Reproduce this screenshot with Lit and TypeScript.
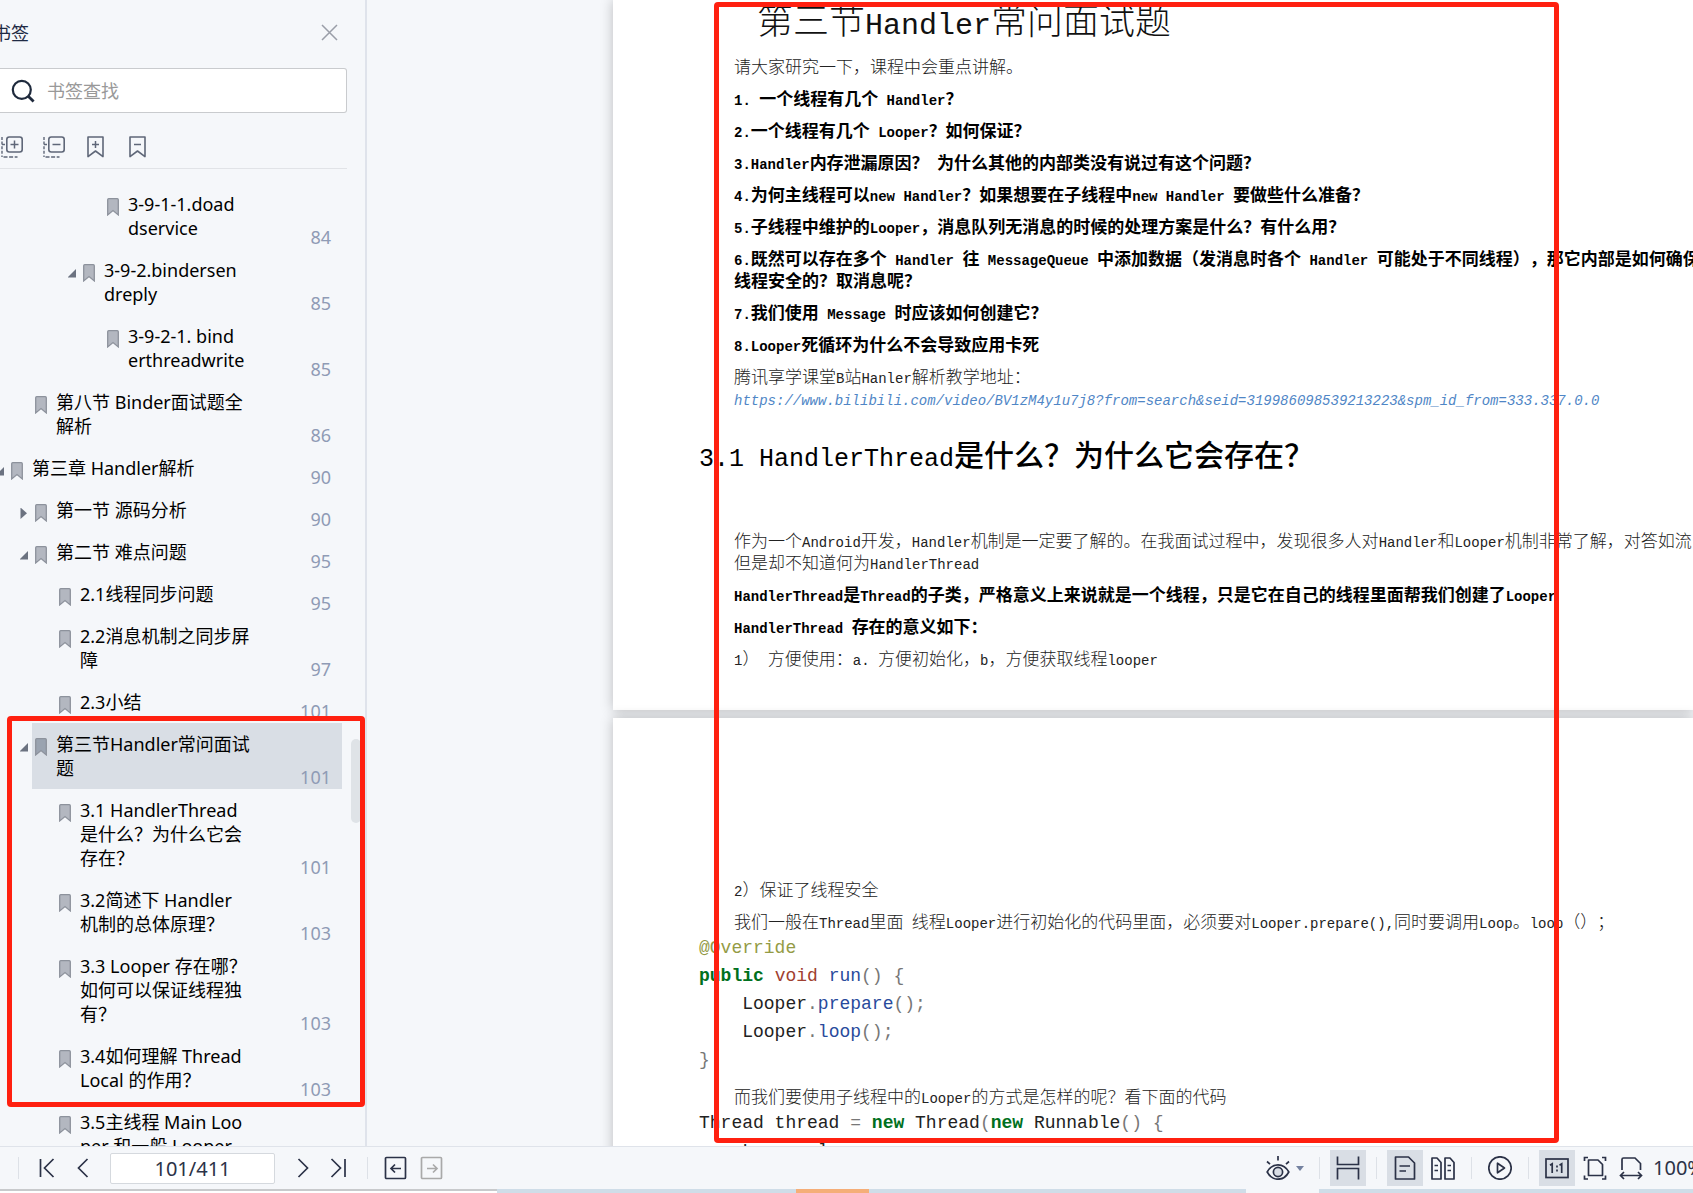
import { LitElement, html, css, svg, nothing } from "lit";
import { customElement, property, state } from "lit/decorators.js";
import { classMap } from "lit/directives/class-map.js";
import { styleMap } from "lit/directives/style-map.js";

type Mark = { id: number; level: number; lines: string[]; page: string; arrow?: "open" | "closed" };

const MARKS: Mark[] = [
  { id: 1, level: 4, lines: ["3-9-1-1.doad", "dservice"], page: "84" },
  { id: 2, level: 3, lines: ["3-9-2.bindersen", "dreply"], page: "85", arrow: "open" },
  { id: 3, level: 4, lines: ["3-9-2-1. bind", "erthreadwrite"], page: "85" },
  { id: 4, level: 1, lines: ["第八节 Binder面试题全", "解析"], page: "86" },
  { id: 5, level: 0, lines: ["第三章 Handler解析"], page: "90", arrow: "open" },
  { id: 6, level: 1, lines: ["第一节 源码分析"], page: "90", arrow: "closed" },
  { id: 7, level: 1, lines: ["第二节 难点问题"], page: "95", arrow: "open" },
  { id: 8, level: 2, lines: ["2.1线程同步问题"], page: "95" },
  { id: 9, level: 2, lines: ["2.2消息机制之同步屏", "障"], page: "97" },
  { id: 10, level: 2, lines: ["2.3小结"], page: "101" },
  { id: 11, level: 1, lines: ["第三节Handler常问面试", "题"], page: "101", arrow: "open" },
  { id: 12, level: 2, lines: ["3.1 HandlerThread", "是什么？为什么它会", "存在？"], page: "101" },
  { id: 13, level: 2, lines: ["3.2简述下 Handler", "机制的总体原理？"], page: "103" },
  { id: 14, level: 2, lines: ["3.3 Looper 存在哪？", "如何可以保证线程独", "有？"], page: "103" },
  { id: 15, level: 2, lines: ["3.4如何理解 Thread", "Local 的作用？"], page: "103" },
  { id: 16, level: 2, lines: ["3.5主线程 Main Loo", "per 和一般 Looper"], page: "" },
];

@customElement("bookmark-panel")
export class BookmarkPanel extends LitElement {
  @state() private selected = 11;

  static styles = css`
    :host {
      display: flex;
      flex-direction: column;
      flex: none;
      width: 365px;
      border-right: 2px solid #dfe3eb;
      background: #f5f7fa;
      overflow: hidden;
      position: relative;
      font-family: "Noto Sans", "Noto Sans CJK SC", sans-serif;
      font-size: 18px;
      color: #000;
    }
    button { border: 0; background: none; padding: 0; margin: 0; font: inherit; color: inherit; }
    svg { display: block; }
    .head { display: flex; align-items: center; justify-content: space-between; height: 64px; padding: 0 27px 4px 0; }
    .title { margin: 0 0 0 -7px; font-size: 18px; font-weight: 400; color: #1f2a44; }
    .search {
      display: flex; align-items: center; gap: 12px; height: 43px; margin-right: 18px; padding-left: 11px;
      border: 1px solid #c9cbce; border-left: 0; border-radius: 0 3px 3px 0; background: #fff;
    }
    .search input { flex: 1; min-width: 0; border: 0; outline: 0; padding: 0; background: none; font: inherit; color: #222; }
    .search input::placeholder { color: #999; opacity: 1; }
    .tools { display: flex; align-items: center; gap: 18px; height: 43px; padding: 12px 0 0; margin-right: 18px; border-bottom: 1px solid #e1e3e7; }
    .tree { list-style: none; flex: 1; min-height: 0; overflow: hidden; margin: 0 23px 0 -4px; padding: 14px 0 0; }
    .row { display: flex; align-items: stretch; }
    .toggle { width: 8px; height: 10px; margin: 19px 4px 0 0; flex: none; }
    .link { display: flex; flex: 1; min-width: 0; padding: 0 11px 0 3px; color: inherit; text-decoration: none; }
    .link.on { background: #d9dee5; }
    .mark { margin: 15px 9px 0 0; flex: none; }
    .label { flex: 1; padding: 9px 0; line-height: 24px; white-space: nowrap; text-spacing-trim: space-all; }
    .num { align-self: flex-end; line-height: 24px; color: #8f9bb5; }
    .thumb { position: absolute; right: 4px; top: 739px; width: 10px; height: 84px; border-radius: 5px; background: #dfe3e7; }
  `;

  private box(plus: boolean) {
    return svg`<g fill="none" stroke="#5f6778">
      <rect x="6.8" y="2" width="15.4" height="15" rx="2.5" stroke-width="1.6"/>
      <path d="M10.5 9.5h8" stroke-width="1.5"/>
      ${plus ? svg`<path d="M14.5 5.5v8" stroke-width="1.5"/>` : nothing}
      <path d="M2 2v20M2 9.5h5" stroke-width="1.4" stroke-dasharray="3 1.6"/>
      <path d="M3.5 22h14" stroke-width="1.6" stroke-dasharray="4 1.6"/></g>`;
  }

  private flag(plus: boolean) {
    return svg`<g fill="none" stroke="#5f6778" stroke-width="1.6">
      <path d="M4 2h15v19.6L11.5 16 4 21.6z" stroke-linejoin="round"/>
      <path d="M8 9.5h7" stroke-width="1.5"/>
      ${plus ? svg`<path d="M11.5 6v7" stroke-width="1.5"/>` : nothing}</g>`;
  }

  private toggle(m: Mark) {
    if (!m.arrow) return html`<span class="toggle"></span>`;
    return html`<button class="toggle" aria-label=${m.arrow === "open" ? "折叠" : "展开"}>
      <svg width="9" height="11" viewBox="0 0 9 11">
        ${m.arrow === "open"
          ? svg`<path d="M8 1v8.500H-.5z" fill="#6b7280"/>`
          : svg`<path d="M.5 -.5l6.500 5.700-6.500 5.700z" fill="#6b7280"/>`}
      </svg></button>`;
  }

  render() {
    return html`
      <div class="head">
        <h2 class="title">书签</h2>
        <button class="close" aria-label="关闭">
          <svg width="17" height="17" viewBox="0 0 17 17"><path d="M1 1l15 15M16 1L1 16" stroke="#9a9ea8" stroke-width="1.5"/></svg>
        </button>
      </div>
      <label class="search">
        <svg width="24" height="24" viewBox="0 0 24 24" fill="none" stroke="#1f2a3d" stroke-width="2.2"><circle cx="10.8" cy="10.8" r="9"/><path d="M17 17l5.6 5.6" stroke-width="2.8"/></svg>
        <input type="text" placeholder="书签查找" aria-label="书签查找" />
      </label>
      <div class="tools">
        <button aria-label="全部展开"><svg width="24" height="24" viewBox="0 0 24 24">${this.box(true)}</svg></button>
        <button aria-label="全部折叠"><svg width="24" height="24" viewBox="0 0 24 24">${this.box(false)}</svg></button>
        <button aria-label="添加书签"><svg width="24" height="24" viewBox="0 0 24 24">${this.flag(true)}</svg></button>
        <button aria-label="删除书签"><svg width="24" height="24" viewBox="0 0 24 24">${this.flag(false)}</svg></button>
      </div>
      <ul class="tree">
        ${MARKS.map((m) => {
          const on = m.id === this.selected;
          return html`<li class="row" style=${styleMap({ paddingLeft: `${m.level * 24}px` })}>
            ${this.toggle(m)}
            <a class=${classMap({ link: true, on })} href="#p${m.page}" @click=${(e: Event) => { e.preventDefault(); this.selected = m.id; }}>
              <svg class="mark" width="12" height="18" viewBox="0 0 12 18"><path d="M.7 1.7Q.7.7 1.7.7h8.6q1 0 1 1v15.2L6 12.6.7 16.9z" fill=${on ? "#9aa3b0" : "#b3b7c0"} stroke="#8d929c" stroke-width="1.3"/></svg>
              <span class="label">${m.lines.map((l, i) => html`${i ? html`<br />` : nothing}${l}`)}</span>
              <span class="num">${m.page}</span>
            </a>
          </li>`;
        })}
      </ul>
      <div class="thumb"></div>
    `;
  }
}

/* Splits a string so that Latin runs take the narrower half-width face. */
const mixed = (text: string) =>
  (text.match(/[\x20-\x7e]+|[^\x20-\x7e]+/g) ?? []).map((part) =>
    /^[\x20-\x7e]/.test(part) ? html`<span class="latin">${part}</span>` : part
  );

@customElement("document-view")
export class DocumentView extends LitElement {
  static styles = css`
    :host {
      display: flex; flex-direction: column; gap: 8px; flex: 1; min-width: 0; overflow: hidden;
      padding-left: 246px; background: #f5f7fa;
      font-family: "Noto Sans CJK SC", sans-serif; text-spacing-trim: space-all;
    }
    .page { flex: none; padding: 0 0 31px 86px; background: #fff; box-shadow: 0 0 12px rgba(0, 0, 0, 0.24); white-space: nowrap; }
    .second { padding-top: 160px; }
    .latin { font-family: "Liberation Mono", monospace; font-size: 14px; line-height: 1; white-space: pre; }
    h1 { margin: 0 0 14px 58px; font-size: 36px; line-height: 36px; font-weight: 300; color: #111; }
    h1 .latin { font-size: 30px; }
    h2 { margin: 24px 0 56px; font-size: 30px; line-height: 40px; font-weight: 500; color: #000; }
    h2 .latin { font-size: 25px; }
    p { margin: 0 0 10px 35px; font-size: 17px; line-height: 22px; font-weight: 300; color: #222; }
    .strong { font-weight: 700; color: #000; }
    .tight { margin-bottom: 2px; }
    a { color: #4f86c6; font-style: italic; text-decoration: none; }
    pre { margin: 0 0 11px; font-family: "Liberation Mono", monospace; font-size: 18px; line-height: 28px; color: #222; }
    .at { color: #949b45; }
    .kw { color: #007020; font-weight: 700; }
    .ty { color: #a04030; }
    .fn { color: #284a9c; }
    .pu { color: #777; }
  `;

  private p(text: string, strong = false) {
    return html`<p class=${strong ? "strong" : ""}>${mixed(text)}</p>`;
  }

  render() {
    const url = "https://www.bilibili.com/video/BV1zM4y1u7j8?from=search&seid=319986098539213223&spm_id_from=333.337.0.0";
    return html`
      <article class="page">
        <h1>${mixed("第三节Handler常问面试题")}</h1>
        ${this.p("请大家研究一下，课程中会重点讲解。")}
        ${this.p("1. 一个线程有几个 Handler？", true)}
        ${this.p("2.一个线程有几个 Looper？如何保证？", true)}
        ${this.p("3.Handler内存泄漏原因？ 为什么其他的内部类没有说过有这个问题？", true)}
        ${this.p("4.为何主线程可以new Handler？如果想要在子线程中new Handler 要做些什么准备？", true)}
        ${this.p("5.子线程中维护的Looper，消息队列无消息的时候的处理方案是什么？有什么用？", true)}
        <p class="strong">${mixed("6.既然可以存在多个 Handler 往 MessageQueue 中添加数据（发消息时各个 Handler 可能处于不同线程），那它内部是如何确保")}<br />${mixed("线程安全的？取消息呢？")}</p>
        ${this.p("7.我们使用 Message 时应该如何创建它？", true)}
        ${this.p("8.Looper死循环为什么不会导致应用卡死", true)}
        <p>${mixed("腾讯享学课堂B站Hanler解析教学地址：")}<br /><a href=${url}>${mixed(url)}</a></p>
        <h2>${mixed("3.1 HandlerThread是什么？为什么它会存在？")}</h2>
        <p>${mixed("作为一个Android开发，Handler机制是一定要了解的。在我面试过程中，发现很多人对Handler和Looper机制非常了解，对答如流，")}<br />${mixed("但是却不知道何为HandlerThread")}</p>
        ${this.p("HandlerThread是Thread的子类，严格意义上来说就是一个线程，只是它在自己的线程里面帮我们创建了Looper", true)}
        ${this.p("HandlerThread 存在的意义如下：", true)}
        ${this.p("1） 方便使用：a. 方便初始化，b，方便获取线程looper")}
      </article>
      <article class="page second">
        ${this.p("2）保证了线程安全")}
        <p class="tight">${mixed("我们一般在Thread里面 线程Looper进行初始化的代码里面，必须要对Looper.prepare(),同时要调用Loop。loop（）；")}</p>
        <pre><span class="at">@Override</span>
<span class="kw">public</span> <span class="ty">void</span> <span class="fn">run</span><span class="pu">() {</span>
    Looper<span class="pu">.</span><span class="fn">prepare</span><span class="pu">();</span>
    Looper<span class="pu">.</span><span class="fn">loop</span><span class="pu">();</span>
<span class="pu">}</span></pre>
        <p class="tight">${mixed("而我们要使用子线程中的Looper的方式是怎样的呢？看下面的代码")}</p>
        <pre>Thread thread <span class="pu">=</span> <span class="kw">new</span> Thread<span class="pu">(</span><span class="kw">new</span> Runnable<span class="pu">() {</span>
    Looper looper<span class="pu">;</span></pre>
      </article>
    `;
  }
}

const ICONS = {
  first: svg`<path d="M5.5 3v18M18.5 3l-9 9 9 9"/>`,
  prev: svg`<path d="M16.5 3l-9 9 9 9"/>`,
  next: svg`<path d="M7.5 3l9 9-9 9"/>`,
  last: svg`<path d="M4.5 3l9 9-9 9M18 3v18"/>`,
  back: svg`<rect x="1.5" y="1.5" width="20" height="21" rx="1"/><path d="M17 12.5H7M11 8.5l-4 4 4 4"/>`,
  forward: svg`<rect x="1.5" y="1.5" width="20" height="21" rx="1"/><path d="M7 12.5h10M13 8.5l4 4-4 4"/>`,
  eye: svg`<path d="M1.2 16Q5 8.8 12 8.8T22.8 16Q19 23.2 12 23.2T1.2 16z"/><circle cx="12" cy="16" r="4.6" fill="#d9dee5"/><path d="M12 0v4.5M1 5.5l3 2.7M23 5.5l-3 2.7"/>`,
  scroll: svg`<path d="M1.5.5v8h21v-8M1.5 23.5v-11h21v11"/>`,
  single: svg`<path d="M2.5 1h13l6 6v16h-19z" stroke-linejoin="round"/><path d="M6.5 10h10.5M6.5 15h6.5"/>`,
  double: svg`<path d="M1 2h5l4 4.5V23H1zM14 2h5l4 4.5V23h-9z" stroke-linejoin="round"/><path d="M3.5 9.5H7M3.5 14.5H7M16.5 9.5H20M16.5 14.5H20"/>`,
  play: svg`<circle cx="12" cy="12" r="11.2"/><path d="M9.5 7.2v9.6l7-4.8z" stroke-linejoin="round"/>`,
  actual: svg`<rect x="1" y="3" width="22" height="18.5"/><path d="M5 9.2l2.2-1.4V17M14.5 9.2l2.2-1.4V17M12 9.5v2M12 13.5v2"/>`,
  fit: svg`<path d="M5.5 4h9.5l4.5 4.5V19.5h-14z" stroke-linejoin="round"/><path d="M1.5 5V1.500h3.500M19 1.500h3.500V5M22.500 19.500V23H19M5 23H1.500v-3.500"/>`,
  width: svg`<path d="M3 14V3.500Q3 2 4.500 2H16l5.500 5.500V14"/><path d="M1.500 19.500h21M5 16l-3.500 3.500L5 23M19 16l3.500 3.500L19 23"/>`,
};

@customElement("status-bar")
export class StatusBar extends LitElement {
  @property() page = "101/411";

  static styles = css`
    :host { display: block; flex: none; font-family: "Noto Sans", "Noto Sans CJK SC", sans-serif; background: #f5f7fa; border-top: 1px solid #dfe3ea; }
    .bar { display: flex; align-items: center; height: 42px; padding-left: 18px; color: #2b3247; overflow: hidden; }
    .sep { flex: none; width: 1px; height: 22px; margin: 0 10px; background: #dde1e7; }
    .start { margin-left: 0; }
    .btn { flex: none; display: flex; align-items: center; justify-content: center; width: 36px; height: 36px; border: 0; padding: 0; margin: 0; background: none; color: inherit; }
    .btn.on { background: #d9dee5; }
    .btn:disabled { color: #a9a9a9; }
    .wide { width: 48px; margin-left: auto; gap: 6px; }
    .pair { margin-left: 2px; }
    .page { flex: none; box-sizing: border-box; width: 165px; height: 31px; margin: 0 10px 0 9px; padding: 0; border: 1px solid #d5d9de; border-radius: 2px; background: #fff; text-align: center; font-family: inherit; font-size: 20px; color: #2b3247; }
    .zoom { flex: none; width: 40px; margin-left: 4px; overflow: hidden; white-space: nowrap; font-size: 20px; line-height: 28px; }
    .edge { display: flex; height: 4px; background: #cfdde8; }
    .grey { width: 497px; background: linear-gradient(#c8cacc 50%, #fff 50%); }
    .tab { width: 73px; margin-left: 299px; background: #f5ae78; }
    .gap { width: 73px; margin-left: 377px; background: #f5f7fa; }
  `;

  private btn(icon: keyof typeof ICONS, label: string, cls = "", off = false) {
    return html`<button class="btn ${cls}" aria-label=${label} ?disabled=${off}>
      <svg width="24" height="24" viewBox="0 0 24 24" fill="none" stroke="currentColor" stroke-width="1.7">${ICONS[icon]}</svg>
      ${icon === "eye" ? html`<svg width="8" height="5" viewBox="0 0 8 5"><path d="M0 0h8L4 5z" fill="#7482a0" /></svg>` : nothing}
    </button>`;
  }

  render() {
    const sep = html`<span class="sep"></span>`;
    return html`
      <div class="bar">
        <span class="sep start"></span>
        ${this.btn("first", "第一页")}${this.btn("prev", "上一页")}
        <input class="page" aria-label="页码" .value=${this.page} />
        ${this.btn("next", "下一页")}${this.btn("last", "最后一页")}
        ${sep}${this.btn("back", "后退")}${this.btn("forward", "前进", "", true)}
        ${this.btn("eye", "护眼模式", "wide")}
        ${sep}${this.btn("scroll", "连续滚动", "on")}
        ${sep}${this.btn("single", "单页", "on")}${this.btn("double", "双页", "pair")}
        ${sep}${this.btn("play", "播放")}
        ${sep}${this.btn("actual", "实际大小", "on")}${this.btn("fit", "适合页面", "pair")}${this.btn("width", "适合宽度")}
        <span class="zoom">100%</span>
      </div>
      <div class="edge"><span class="grey"></span><span class="tab"></span><span class="gap"></span></div>
    `;
  }
}

@customElement("app-root")
export class AppRoot extends LitElement {
  static styles = css`
    :host { display: flex; flex-direction: column; height: 100vh; overflow: hidden; position: relative; background: #f5f7fa; }
    .main { display: flex; flex: 1; min-height: 0; }
    .note { position: absolute; box-sizing: border-box; border: 5px solid #ff2010; border-radius: 4px; pointer-events: none; }
    .tree-note { left: 7px; top: 716px; width: 358px; height: 391px; }
    .doc-note { left: 714px; top: 2px; width: 845px; height: 1141px; }
  `;

  render() {
    return html`
      <div class="main">
        <bookmark-panel></bookmark-panel>
        <document-view></document-view>
      </div>
      <status-bar></status-bar>
      <div class="note tree-note"></div>
      <div class="note doc-note"></div>
    `;
  }
}
